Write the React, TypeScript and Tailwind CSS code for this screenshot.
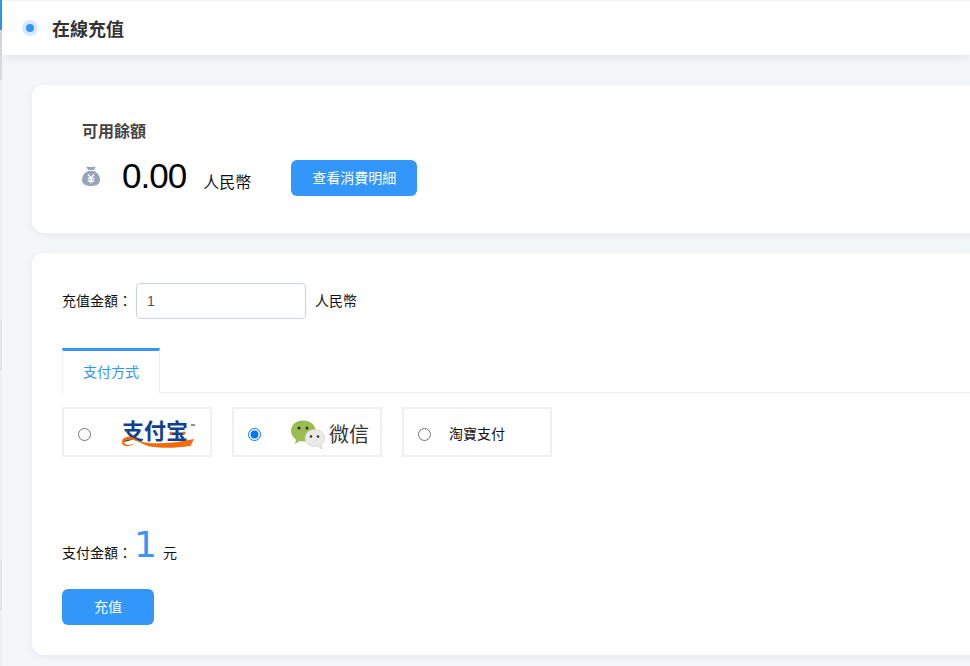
const cjk = "font-['Liberation_Sans','Noto_Sans_CJK_TC',sans-serif]";

function MoneyBag() {
  return (
    <svg width="20" height="22" viewBox="0 0 20 22" className="-ml-px -mt-[4px] block">
      <path d="M6 1.500c2 .8 6 .8 8 0 .5 0 .6.5.4 1L12.800 5H7.200L5.600 2.500C5.400 2 5.500 1.500 6 1.500z" fill="#98a4ba" />
      <path d="M7 6h6c3.500 1.700 6 5 6 8.500C19 19 15.500 21 10 21S1 19 1 14.500C1 11 3.500 7.700 7 6z" fill="#98a4ba" />
      <path d="M7 9.500l3 3.500 3-3.500M6.800 13.500h6.400M6.800 16h6.400M10 13v5.500" fill="none" stroke="#fff" strokeWidth="1.300" />
    </svg>
  );
}

function AlipayLogo() {
  return (
    <div className="relative h-[26px] w-[74px]">
      <span className={`absolute left-[1px] top-[-3px] whitespace-nowrap text-[22px] leading-[26px] font-bold text-[#12408f] ${cjk}`}>支付宝</span>
      <svg width="74" height="27" viewBox="0 0 74 27" className="absolute left-0 top-0">
        <path d="M1 20.500C1 15 8 13 14 16.500c5 3 9 4 14 4.500 14 .8 30-.5 45-4-1 2-2 4-3.500 7-14 2-27 2.500-41 .5C23 23 18 19.500 13 18 8 17 3 18 3.500 21c.5 2.500 6 2.500 10 .5-4 3.500-12.500 4-12.500-1z" fill="#f26a0a" />
        <circle cx="50" cy="11" r="1.600" fill="#f26a0a" />
        <circle cx="63" cy="11" r="1.600" fill="#f26a0a" />
      </svg>
      <span className="absolute right-0 top-[2px] h-[2px] w-[4px] bg-[#8a8f99]" />
    </div>
  );
}

function WechatLogo() {
  return (
    <div className="flex items-center">
      <svg width="36" height="32" viewBox="0 0 36 32">
        <path d="M13 1.500c7 0 12.500 4.500 12.500 10.500S20 22.500 13 22.500c-1.200 0-2.400-.2-3.500-.5L5 25l1-4.500C3 18.500 1 15.500 1 12 1 6 6 1.500 13 1.500z" fill="#9bbd4f" />
        <circle cx="9" cy="9" r="1.500" fill="#26331a" />
        <circle cx="17" cy="9" r="1.500" fill="#26331a" />
        <path d="M24.500 10.500c5.800 0 10 3.700 10 8.500 0 2.700-1.300 5-3.500 6.500l1 4.500-4.500-3c-1 .3-2 .4-3 .4-5.500 0-9.500-3.700-9.500-8.400s4-8.500 9.500-8.500z" fill="#e9e9e6" stroke="#c9c9c6" strokeWidth=".6" />
        <circle cx="21" cy="17.500" r="1.300" fill="#333" />
        <circle cx="28" cy="17.500" r="1.300" fill="#333" />
      </svg>
      <span className={`ml-[3px] text-[20px] leading-[26px] text-[#333] ${cjk}`}>微信</span>
    </div>
  );
}

function PayOption({ checked, children }: { checked?: boolean; children: React.ReactNode }) {
  return (
    <label className="flex h-[50px] w-[150px] items-center border-2 border-[#f0f0f0] bg-white pl-[14px] pt-[5px]">
      <input type="radio" name="pay" defaultChecked={checked} className="m-0 h-[13px] w-[13px] shrink-0 accent-[#0075ff]" />
      {children}
    </label>
  );
}

export default function App() {
  return (
    <div className={`flex h-[666px] w-[970px] overflow-hidden bg-[#f4f7fa] text-[14px] text-[#111] ${cjk}`}>
      <aside className="flex w-[2px] shrink-0 flex-col bg-[#eceff3]">
        <div className="h-[30px] bg-[#3296fa]" />
        <div className="h-[50px] bg-[#d8dce2]" />
        <div className="h-[240px]" />
        <div className="h-[50px] bg-[#e1e4e8]" />
        <div className="h-[190px]" />
        <div className="h-[50px] bg-[#e1e4e8]" />
      </aside>
      <div className="min-w-0 flex-1">
        <header className="flex h-[55px] items-center border-t border-[#f0f2f5] bg-white pl-[20px] shadow-[0_2px_10px_rgba(30,50,80,0.1)]">
          <span className="flex h-4 w-4 items-center justify-center rounded-full bg-[#d4e8fe]">
            <span className="h-2 w-2 rounded-full bg-[#3296fa]" />
          </span>
          <h1 className="ml-[14px] pt-[5px] text-[18px] font-bold text-[#333]">在線充值</h1>
        </header>
        <main className="w-[1000px] pl-[30px] pt-[30px]">
          <section className="h-[148px] rounded-[12px] bg-white pl-[50px] pt-[36px] shadow-[0_2px_8px_rgba(30,50,80,0.07)]">
            <h2 className="text-[16px] leading-[22px] font-bold text-[#444]">可用餘額</h2>
            <div className="mt-[17px] flex items-center">
              <MoneyBag />
              <span className="-mt-[4px] ml-[21px] font-['Liberation_Sans',sans-serif] text-[35px] leading-[36px] tracking-[-1px] text-black">0.00</span>
              <span className="ml-[17px] mt-[9px] text-[16px] text-[#111]">人民幣</span>
              <button className="ml-[40px] h-[36px] w-[126px] rounded-[6px] bg-[#3296fa] text-[14px] text-white">查看消費明細</button>
            </div>
          </section>
          <section className="mt-[20px] h-[402px] rounded-[12px] bg-white pl-[30px] pt-[30px] shadow-[0_2px_8px_rgba(30,50,80,0.07)]">
            <div className="flex items-center">
              <span>充值金額：</span>
              <input
                readOnly
                value="1"
                className="ml-[4px] h-[36px] w-[170px] rounded-[4px] border border-[#ccd3e0] px-[10px] text-[14px] text-[#555] outline-none"
              />
              <span className="ml-[9px]">人民幣</span>
            </div>
            <div className="mt-[29px] flex h-[45px] border-b border-[#eeeeee]">
              <div className="-mb-px flex w-[98px] items-center justify-center border-x border-[#eeeeee] border-t-[3px] border-t-[#3296fa] bg-white text-[#3296fa]">支付方式</div>
            </div>
            <div className="mt-[14px] flex gap-[20px]">
              <PayOption>
                <span className="ml-[30px]"><AlipayLogo /></span>
              </PayOption>
              <PayOption checked>
                <span className="ml-[29px]"><WechatLogo /></span>
              </PayOption>
              <PayOption>
                <span className="ml-[18px]">淘寶支付</span>
              </PayOption>
            </div>
            <div className="mt-[68px] flex h-[40px] items-center">
              <span className="mt-[16px]">支付金額：</span>
              <span className="ml-[2px] font-['DejaVu_Sans',sans-serif] text-[36px] leading-[40px] text-[#3a96fa]">1</span>
              <span className="ml-[6px] mt-[16px]">元</span>
            </div>
            <button className="mt-[24px] block h-[36px] w-[92px] rounded-[6px] bg-[#3296fa] text-[14px] text-white">充值</button>
          </section>
        </main>
      </div>
    </div>
  );
}
